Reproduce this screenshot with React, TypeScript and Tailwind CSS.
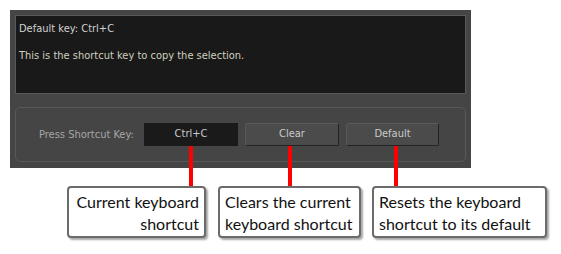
const ui = "font-['Tahoma','DejaVu_Sans_Condensed','Liberation_Sans',sans-serif]";

function Callout({ lines, align, className }: { lines: string[]; align: "left" | "right"; className: string }) {
  return (
    <div
      className={`h-[52px] rounded-[4px] border-2 border-[#6b6b6b] bg-white px-[5px] pt-[3px] shadow-[2px_2px_2px_rgba(0,0,0,0.35)] ${className}`}
    >
      {lines.map((l) => (
        <div key={l} className={`whitespace-nowrap leading-[22px] ${align === "right" ? "text-right" : "text-left"}`}>
          {l}
        </div>
      ))}
    </div>
  );
}

function UiButton({ label, className }: { label: string; className: string }) {
  return (
    <button
      className={`ml-[7px] flex h-[23px] items-center justify-center rounded-[2px] border border-[#232323] border-l-[#575757] border-t-[#5a5a5a] bg-[#4b4b4b] text-[#cacaca] ${className}`}
    >
      {label}
    </button>
  );
}

export default function App() {
  return (
    <div className="relative h-[254px] w-[561px] bg-white">
      <div className="pl-[10px] pt-[10px]">
        {/* dialog panel */}
        <div className={`flex h-[158px] w-[461px] flex-col gap-[13px] bg-[#454545] p-[5px] text-[11px] ${ui}`}>
          <div className="h-[79px] border border-[#5a5a5a] bg-[#191919] px-[3px] pt-[6px] text-[#d2d2d2]">
            <div className="leading-[14px]">Default key: Ctrl+C</div>
            <div className="mt-[13px] leading-[14px] text-[#cfcfbf]">This is the shortcut key to copy the selection.</div>
          </div>
          <div className="flex h-[55px] items-start rounded-[5px] border border-[#585858] pl-[23px] pt-[15px]">
            <div className="w-[105px] pt-[4px] text-[#a6a6a6]">Press Shortcut Key:</div>
            <div className="flex h-[23px] w-[94px] items-center justify-center bg-[#1a1a1a] text-[#c8ccd2]">Ctrl+C</div>
            <UiButton label="Clear" className="w-[94px]" />
            <UiButton label="Default" className="w-[93px]" />
          </div>
        </div>
      </div>

      {/* annotation leaders */}
      <div className="absolute left-[189px] top-[146px] h-[40px] w-[4px] bg-[#ff0000]" />
      <div className="absolute left-[288px] top-[146px] h-[40px] w-[4px] bg-[#ff0000]" />
      <div className="absolute left-[394px] top-[146px] h-[40px] w-[4px] bg-[#ff0000]" />

      {/* callouts */}
      <div className="mt-[18px] flex pl-[67px] font-['Lato',sans-serif] text-[16px] text-[#111]">
        <Callout className="w-[139px]" align="right" lines={["Current keyboard", "shortcut"]} />
        <Callout className="ml-[12px] w-[143px]" align="left" lines={["Clears the current", "keyboard shortcut"]} />
        <Callout className="ml-[11px] w-[175px]" align="left" lines={["Resets the keyboard", "shortcut to its default"]} />
      </div>
    </div>
  );
}
